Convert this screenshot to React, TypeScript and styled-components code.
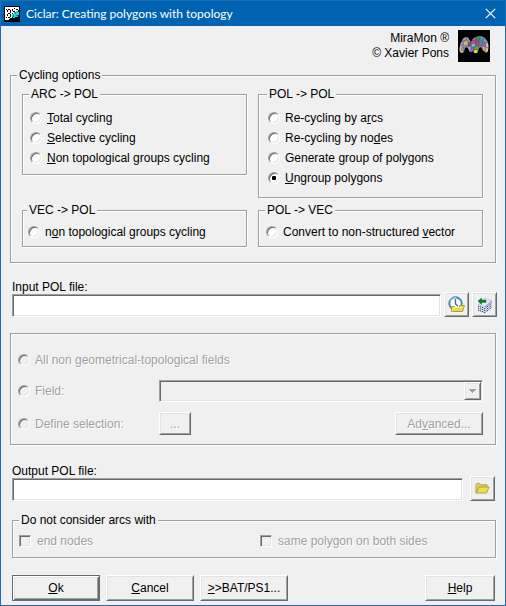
import React from 'react';
import styled, { createGlobalStyle, css } from 'styled-components';

const FACE = '#f0f0f0';
const SHADOW = '#a0a0a0';
const DARK = '#696969';
const LIGHT = '#e3e3e3';

const GlobalStyle = createGlobalStyle`
  *, *::before, *::after { box-sizing: border-box; }
  body {
    margin: 0;
    background: ${FACE};
    color: #000;
    font: 12px/14px "Liberation Sans", Arial, sans-serif;
  }
  button, input, select { font: inherit; color: inherit; margin: 0; }
`;

const sunken = css`
  border: 1px solid;
  border-color: ${SHADOW} #fff #fff ${SHADOW};
  box-shadow: inset 1px 1px 0 ${DARK}, inset -1px -1px 0 ${LIGHT};
`;

const raised = css`
  border: 1px solid;
  border-color: #fff ${DARK} ${DARK} #fff;
  box-shadow: inset 1px 1px 0 ${LIGHT}, inset -1px -1px 0 ${SHADOW};
`;

const disabledText = css`
  color: ${SHADOW};
  text-shadow: 1px 1px 0 #fff;
`;

const Dialog = styled.main`
  display: flex;
  flex-direction: column;
  min-height: 100vh;
  border: 1px solid #1a70b8;
  background: ${FACE};
`;

const TitleBar = styled.header`
  display: flex;
  align-items: center;
  gap: 6px;
  height: 25px;
  padding: 0 9px 0 3px;
  background: #0063b1;
  color: #fff;
`;

const Title = styled.h1`
  flex: 1;
  margin: 0;
  font: 400 12px/16px Lato, "Open Sans", sans-serif;
`;

const CloseButton = styled.button`
  display: flex;
  padding: 0;
  border: 0;
  background: none;
`;

const Form = styled.form`
  display: flex;
  flex-direction: column;
  padding: 4px 9px;
`;

const Credits = styled.div`
  display: flex;
  justify-content: flex-end;
  align-items: center;
  gap: 9px;
  padding-right: 6px;
  text-align: right;
  line-height: 15px;
`;

const Group = styled.fieldset<{ $pad: string; $top?: number; $left?: number }>`
  min-width: 0;
  margin: ${p => p.$top ?? 0}px 0 0 ${p => p.$left ?? 0}px;
  padding: ${p => p.$pad};
  border: 1px solid ${SHADOW};
  box-shadow: 1px 1px 0 #fff, inset 1px 1px 0 #fff;
`;

const Legend = styled.legend<{ $indent: number }>`
  margin-left: ${p => p.$indent}px;
  padding: 0 2px;
  background: ${FACE};
`;

const OptionGrid = styled.div`
  display: grid;
  grid-template-columns: 1fr 1fr;
  align-items: start;
  gap: 5px 11px;
`;

const Choice = styled.label<{ $disabled?: boolean; $gap?: number }>`
  display: flex;
  align-items: center;
  gap: ${p => p.$gap ?? 5}px;
  height: 20px;
  white-space: nowrap;
  ${p => p.$disabled && disabledText}
`;

const Radio = styled.input.attrs({ type: 'radio' })`
  appearance: none;
  display: grid;
  place-items: center;
  flex: none;
  width: 12px;
  height: 12px;
  border: 1px solid;
  border-color: ${SHADOW} #fff #fff ${SHADOW};
  border-radius: 50%;
  background: #fff;
  box-shadow: inset 1px 1px 0 ${DARK}, inset -1px -1px 0 ${LIGHT};
  &:checked::before {
    content: '';
    width: 4px;
    height: 4px;
    border-radius: 1px;
    background: #000;
  }
  &:disabled { background: ${FACE}; }
`;

const Check = styled.input.attrs({ type: 'checkbox' })`
  appearance: none;
  flex: none;
  width: 12px;
  height: 12px;
  ${sunken}
  &:disabled { background: ${FACE}; }
`;

const FileRow = styled.div<{ $top: number; $gap: number; $right: number }>`
  display: flex;
  align-items: flex-end;
  gap: ${p => p.$gap}px;
  margin: ${p => p.$top}px ${p => p.$right}px 0 2px;
`;

const FileField = styled.label`
  display: flex;
  flex-direction: column;
  flex: 1;
  min-width: 0;
`;

const TextBox = styled.input.attrs({ type: 'text' })`
  width: 100%;
  height: 23px;
  padding: 2px 4px;
  border-radius: 0;
  background: #fff;
  outline: none;
  ${sunken}
`;

const Button = styled.button<{ $width: number; $height?: number }>`
  display: flex;
  align-items: center;
  justify-content: center;
  flex: none;
  width: ${p => p.$width}px;
  height: ${p => p.$height ?? 26}px;
  padding: 0;
  border-radius: 0;
  background: ${FACE};
  white-space: nowrap;
  ${raised}
  &:disabled { ${disabledText} }
`;

const DefaultButton = styled(Button)`
  border-color: ${DARK};
  box-shadow: inset 1px 1px 0 #fff, inset -1px -1px 0 ${DARK},
    inset 2px 2px 0 ${LIGHT}, inset -2px -2px 0 ${SHADOW};
`;

const SelectionGrid = styled.div`
  display: grid;
  grid-template-columns: 141px 1fr;
  align-items: center;
  row-gap: 10px;
`;

const WideCell = styled.div`
  grid-column: 1 / -1;
`;

const SplitCell = styled.div`
  display: flex;
  justify-content: space-between;
`;

const Combo = styled.div`
  display: flex;
  height: 22px;
  padding: 1px;
  ${sunken}
`;

const ComboSelect = styled.select`
  appearance: none;
  flex: 1;
  min-width: 0;
  border: 0;
  padding: 0 3px;
  background: transparent;
`;

const ComboArrow = styled.span`
  display: flex;
  align-items: center;
  justify-content: center;
  width: 17px;
  ${raised}
`;

const CheckGrid = styled.div`
  display: grid;
  grid-template-columns: 1fr 1fr;
  gap: 6px;
`;

const Actions = styled.div`
  display: flex;
  gap: 6px;
  margin: 17px 1px 0 2px;
`;

const Spacer = styled.span`
  flex: 1;
`;

const AppIcon = () => (
  <svg width="16" height="16" viewBox="0 0 16 16" shapeRendering="crispEdges" aria-hidden="true">
    <rect width="16" height="16" fill="#000" />
    <path d="M1 1h14v3h-1v1h-2v2h-1v4H8v1H6v1H5v1H1z" fill="#fff" />
    <path d="M2 3h1v1H2zM4 3h2v1H4zM3 4h1v2H3zM6 4h1v3H6zM4 7h2v1H4zM3 8h1v2H3zM6 8h1v3H6zM4 11h2v1H4zM8 3h1v2H8zM10 2h1v1h-1zM9 5h2v1H9zM12 3h2v1h-2zM8 7h1v1H8zM2 11h1v1H2z" fill="#000" />
    <path d="M8 8h2V6h2V5h2v1h1v3h-1v2h-3v1H9v-1H8z" fill="#12dcdc" />
    <path d="M11 6h1v2h-1zM9 9h1v2H9zM12 9h2v1h-2z" fill="#148a98" />
  </svg>
);

const CloseIcon = () => (
  <svg width="11" height="11" viewBox="0 0 11 11" aria-hidden="true">
    <path d="M.8.8l9.4 9.4M10.2.8L.8 10.2" stroke="#fff" strokeWidth="1.2" />
  </svg>
);

const Logo = () => (
  <svg width="32" height="32" viewBox="0 0 32 32" role="img" aria-label="MiraMon">
    <defs>
      <clipPath id="arches">
        <path d="M2 22c-1-3 0-8 2-11 1-3 3-4 5-4 2 1 3 4 4 6 1-4 3-5 5-6 3-1 7-1 9 1 3 3 4 8 3 12 0 2-2 3-3 2-2-1-3-3-4-5l-2 1-1 3-1 2h-3l-1-3-1 2h-2l-2-4c-1-1-2-1-3 0l-1 4-2 1z" />
      </clipPath>
    </defs>
    <rect width="32" height="32" fill="#000" />
    <g clipPath="url(#arches)" stroke="#303038" strokeWidth=".3">
      <path d="M0 5h32v20H0z" fill="#8993ac" />
      <path d="M3 6h6l-1 4-6 2z" fill="#aaa69c" />
      <path d="M9 6l5 3-1 5-5-4z" fill="#7f95a2" />
      <path d="M1 12l5-1-1 4-5 2z" fill="#b88ac2" />
      <path d="M5 12l4-2 2 5-5 1z" fill="#cbb28c" />
      <path d="M10 13l3-1 1 4-4 0z" fill="#a84a5c" />
      <path d="M0 17l4-2 2 4-2 5-4 0z" fill="#bcb8cc" />
      <path d="M3 18l2-1 1 2-2 2z" fill="#cf9c48" />
      <path d="M9 17l4-1 1 5-4 3z" fill="#86a4dc" />
      <path d="M14 9l4-3 1 4-6 1z" fill="#6c80a8" />
      <path d="M13 11l5-1 0 3-5 1z" fill="#ec38a4" />
      <path d="M18 6l5 0-1 4-3 1z" fill="#3c9664" />
      <path d="M22 6l5 1-1 4-4-1z" fill="#30a8a0" />
      <path d="M26 8l5 4-3 2-3-3z" fill="#8a92a0" />
      <path d="M13 14l4-1 1 3-4 2z" fill="#62c4d4" />
      <path d="M17 12l4-1 1 3-4 2z" fill="#bc4c58" />
      <path d="M21 11l4 1 0 3-4 1z" fill="#6878d0" />
      <path d="M24 13l4 0 0 4-4-1z" fill="#ac64b8" />
      <path d="M28 13l4 0 0 4-4 1z" fill="#ccd0d4" />
      <path d="M13 18l3-1 0 5-3 0z" fill="#b456bc" />
      <path d="M16 17l5-1 0 4-5 0z" fill="#4cac64" />
      <path d="M16 20l4 0-1 4h-3z" fill="#f8e428" />
      <path d="M24 16l4 1 0 4-3 0z" fill="#d4a47c" />
      <path d="M28 18l4 0-2 5-3 0z" fill="#e4cc9c" />
    </g>
  </svg>
);

const RecentIcon = () => (
  <svg width="17" height="17" viewBox="0 0 17 17" aria-hidden="true">
    <circle cx="7.5" cy="7.5" r="6.2" fill="#fff" stroke="#4a86b8" strokeWidth="2" />
    <path d="M2 5.5a6 6 0 0 1 6-4" fill="none" stroke="#8fc4e6" strokeWidth="1.2" />
    <path d="M7.5 3v5l2.5 2" fill="none" stroke="#2468c8" strokeWidth="1.3" />
    <path d="M3.5 15.5v-5h3l1 1h4v-2h5l-2 6z" fill="#e2dc52" stroke="#bd9638" />
    <path d="M4 15l2-3.500h9" fill="none" stroke="#f1ed8a" />
  </svg>
);

const LayersIcon = () => (
  <svg width="16" height="16" viewBox="0 0 16 16" aria-hidden="true">
    <path d="M1 8l7 2.500L15 5v4.500L8 15 1 12.500z" fill="#f4f8ff" />
    <path d="M1 9l7 2.500 7-5.500M1 11l7 2.500 7-5.500M1 13l7 2.500 7-5.500" fill="none" stroke="#1c3864" strokeDasharray="1.400 .6" />
    <path d="M1 7.500L8 1l7 3-7 6z" fill="#dfe9fa" stroke="#9fb2d4" strokeWidth=".6" />
    <path d="M8 10l7-6" stroke="#5f7db0" strokeWidth=".8" />
    <path d="M1 4l3.500-3v2H9v2.500H4.500v2z" fill="#0f8020" stroke="#0a5c18" strokeWidth=".4" />
  </svg>
);

const FolderIcon = () => (
  <svg width="15" height="11" viewBox="0 0 15 11" aria-hidden="true">
    <path d="M1 10V1.500L2 .6h2.500l1 1.200H12v2" fill="#d9d374" stroke="#c0983c" />
    <path d="M1.200 10L4 4h10l-2.500 6z" fill="#e6e05a" stroke="#c0983c" />
    <path d="M4 7.500h6" stroke="#e9ee20" strokeWidth="2" />
  </svg>
);

type OptionDef = { id: string; text: React.ReactNode };

const arcToPol: OptionDef[] = [
  { id: 'total', text: <span><u>T</u>otal cycling</span> },
  { id: 'selective', text: <span><u>S</u>elective cycling</span> },
  { id: 'arc-groups', text: <span><u>N</u>on topological groups cycling</span> },
];
const polToPol: OptionDef[] = [
  { id: 'by-arcs', text: <span>Re-cycling by a<u>r</u>cs</span> },
  { id: 'by-nodes', text: <span>Re-cycling by no<u>d</u>es</span> },
  { id: 'group', text: <span>Generate <u>g</u>roup of polygons</span> },
  { id: 'ungroup', text: <span><u>U</u>ngroup polygons</span> },
];
const vecToPol: OptionDef[] = [
  { id: 'vec-groups', text: <span>n<u>o</u>n topological groups cycling</span> },
];
const polToVec: OptionDef[] = [
  { id: 'to-vector', text: <span>Convert to non-structured <u>v</u>ector</span> },
];

const OptionGroup = ({ title, options, pad }: { title: string; options: OptionDef[]; pad: string }) => (
  <Group $pad={pad}>
    <Legend $indent={-1}>{title}</Legend>
    {options.map(o => (
      <Choice key={o.id}>
        <Radio name="cycling" value={o.id} defaultChecked={o.id === 'ungroup'} />
        {o.text}
      </Choice>
    ))}
  </Group>
);

export default function App() {
  return (
    <>
      <GlobalStyle />
      <Dialog>
        <TitleBar>
          <AppIcon />
          <Title>Ciclar: Creating polygons with topology</Title>
          <CloseButton type="button" aria-label="Close"><CloseIcon /></CloseButton>
        </TitleBar>
        <Form onSubmit={e => e.preventDefault()}>
          <Credits>
            <div>MiraMon ®<br />© Xavier Pons</div>
            <Logo />
          </Credits>

          <Group $top={6} $pad="5px 12px 15px 11px">
            <Legend $indent={-5}>Cycling options</Legend>
            <OptionGrid>
              <OptionGroup title="ARC -> POL" options={arcToPol} pad="7px 7px 6px" />
              <OptionGroup title="POL -> POL" options={polToPol} pad="7px 9px 9px" />
              <OptionGroup title="VEC -> POL" options={vecToPol} pad="5px 5px 4px" />
              <OptionGroup title="POL -> VEC" options={polToVec} pad="5px 7px 4px" />
            </OptionGrid>
          </Group>

          <FileRow $top={17} $gap={3} $right={-1}>
            <FileField>Input POL file:<TextBox /></FileField>
            <Button type="button" $width={25} $height={25} aria-label="Recent files"><RecentIcon /></Button>
            <Button type="button" $width={25} $height={25} aria-label="Layers"><LayersIcon /></Button>
          </FileRow>

          <Group $top={16} $pad="16px 12px 9px 7px" disabled>
            <SelectionGrid>
              <WideCell>
                <Choice $disabled><Radio name="records" />All non geometrical-topological fields</Choice>
              </WideCell>
              <Choice $disabled><Radio name="records" />Field:</Choice>
              <Combo>
                <ComboSelect aria-label="Field" />
                <ComboArrow>
                  <svg width="7" height="4" viewBox="0 0 7 4" shapeRendering="crispEdges" aria-hidden="true">
                    <path d="M0 0h7v1H6v1H5v1H4v1H3V3H2V2H1V1H0z" fill={SHADOW} />
                  </svg>
                </ComboArrow>
              </Combo>
              <Choice $disabled><Radio name="records" />Define selection:</Choice>
              <SplitCell>
                <Button type="button" $width={32} $height={23}>...</Button>
                <Button type="button" $width={88} $height={23}><span>Ad<u>v</u>anced...</span></Button>
              </SplitCell>
            </SelectionGrid>
          </Group>

          <FileRow $top={19} $gap={7} $right={1}>
            <FileField>Output POL file:<TextBox /></FileField>
            <Button type="button" $width={25} $height={25} aria-label="Browse"><FolderIcon /></Button>
          </FileRow>

          <Group $top={12} $left={2} $pad="4px 0 6px 6px">
            <Legend $indent={0}>Do not consider arcs with</Legend>
            <CheckGrid>
              <Choice $disabled $gap={6}><Check disabled />end nodes</Choice>
              <Choice $disabled $gap={6}><Check disabled />same polygon on both sides</Choice>
            </CheckGrid>
          </Group>

          <Actions>
            <DefaultButton type="submit" $width={88}><span><u>O</u>k</span></DefaultButton>
            <Button type="button" $width={88}><span><u>C</u>ancel</span></Button>
            <Button type="button" $width={88}><span><u>&gt;</u>&gt;BAT/PS1...</span></Button>
            <Spacer />
            <Button type="button" $width={70}><span><u>H</u>elp</span></Button>
          </Actions>
        </Form>
      </Dialog>
    </>
  );
}
